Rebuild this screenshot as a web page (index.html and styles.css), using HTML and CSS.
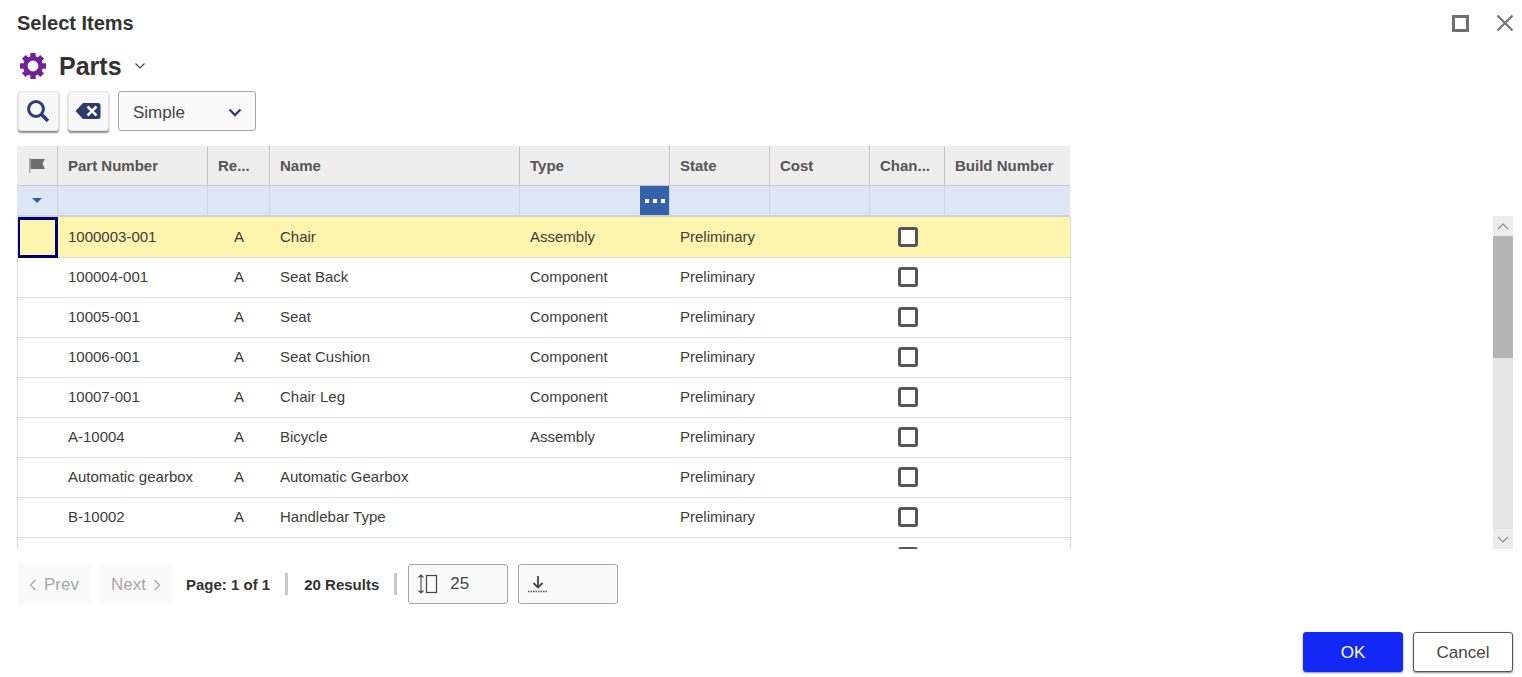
FILE: index.html
```html
<!DOCTYPE html>
<html lang="en">
<head>
<meta charset="utf-8">
<title>Select Items</title>
<link rel="stylesheet" href="styles.css">
</head>
<body>
<div class="dialog">
  <header class="titlebar">
    <h1 class="title">Select Items</h1>
    <div class="window-actions">
      <svg class="win-icon" width="17" height="17" viewBox="0 0 17 17"><rect x="1.500" y="1.500" width="14" height="14" fill="none" stroke="#6e6e6e" stroke-width="3"/></svg>
      <svg class="win-icon" width="18" height="18" viewBox="0 0 18 18"><path d="M1.500 1.500l15 15M16.500 1.500l-15 15" fill="none" stroke="#767676" stroke-width="2.200"/></svg>
    </div>
  </header>

  <div class="context">
    <svg class="gear" width="26" height="26" viewBox="0 0 26 26">
      <g fill="#74209a">
        <rect x="10.300" y="0" width="5.400" height="5"/>
        <rect x="10.300" y="0" width="5.400" height="5" transform="rotate(45 13 13)"/>
        <rect x="10.300" y="0" width="5.400" height="5" transform="rotate(90 13 13)"/>
        <rect x="10.300" y="0" width="5.400" height="5" transform="rotate(135 13 13)"/>
        <rect x="10.300" y="0" width="5.400" height="5" transform="rotate(180 13 13)"/>
        <rect x="10.300" y="0" width="5.400" height="5" transform="rotate(225 13 13)"/>
        <rect x="10.300" y="0" width="5.400" height="5" transform="rotate(270 13 13)"/>
        <rect x="10.300" y="0" width="5.400" height="5" transform="rotate(315 13 13)"/>
      </g>
      <circle cx="13" cy="13" r="7.700" fill="none" stroke="#74209a" stroke-width="4.600"/>
    </svg>
    <span class="context-name">Parts</span>
    <svg class="context-caret" width="12" height="8" viewBox="0 0 12 8"><path d="M1.500 1.500l4.500 4.500 4.500-4.500" fill="none" stroke="#444" stroke-width="1.200"/></svg>
  </div>

  <div class="toolbar">
    <button class="tool-btn" type="button" aria-label="Search">
      <svg width="24" height="24" viewBox="0 0 24 24"><circle cx="10" cy="10" r="7.400" fill="none" stroke="#2b3a82" stroke-width="3"/><path d="M15.500 15.500l6.500 6.500" stroke="#2b3a82" stroke-width="3.600" fill="none"/></svg>
    </button>
    <button class="tool-btn" type="button" aria-label="Clear">
      <svg width="26" height="18" viewBox="0 0 26 18"><path fill="#2b3a66" fill-rule="evenodd" d="M8 1h15a2.500 2.500 0 0 1 2.500 2.500v11A2.500 2.500 0 0 1 23 17H8L.5 9zM11.600 5.400l3.600 3.600-3.600 3.600 1.800 1.800 3.600-3.600 3.600 3.600 1.800-1.800-3.600-3.600 3.600-3.600-1.800-1.800-3.600 3.600-3.600-3.600z"/></svg>
    </button>
    <div class="mode-select">
      <span>Simple</span>
      <svg width="14" height="9" viewBox="0 0 14 9"><path d="M1.500 1.500l5.500 5.500 5.500-5.500" fill="none" stroke="#2b3a82" stroke-width="2.400"/></svg>
    </div>
  </div>

  <div class="grid-head">
    <div class="row head-cols head-row">
      <div class="cell flag-cell"><svg width="18" height="15" viewBox="0 0 18 15"><path d="M1 0h1.500v15H1z" fill="#a8a8a8"/><path d="M2.500 1H17l-2.500 4.500L17 11H2.500z" fill="#6e6e6e"/></svg></div>
      <div class="cell">Part Number</div>
      <div class="cell">Re...</div>
      <div class="cell">Name</div>
      <div class="cell">Type</div>
      <div class="cell">State</div>
      <div class="cell">Cost</div>
      <div class="cell">Chan...</div>
      <div class="cell">Build Number</div>
    </div>
    <div class="row head-cols filter-row">
      <div class="cell flag-cell"><span class="filter-caret"></span></div>
      <div class="cell"></div>
      <div class="cell"></div>
      <div class="cell"></div>
      <div class="cell type-filter"><span class="ellipsis-btn"><i></i><i></i><i></i></span></div>
      <div class="cell"></div>
      <div class="cell"></div>
      <div class="cell"></div>
      <div class="cell"></div>
    </div>
  </div>

  <div class="grid-body">
    <div class="rows">
      <div class="row data-row selected">
        <div class="cell flag-cell focus"></div><div class="cell">1000003-001</div><div class="cell center">A</div><div class="cell">Chair</div><div class="cell">Assembly</div><div class="cell">Preliminary</div><div class="cell"></div><div class="cell center"><span class="check"></span></div><div class="cell"></div>
      </div>
      <div class="row data-row">
        <div class="cell flag-cell"></div><div class="cell">100004-001</div><div class="cell center">A</div><div class="cell">Seat Back</div><div class="cell">Component</div><div class="cell">Preliminary</div><div class="cell"></div><div class="cell center"><span class="check"></span></div><div class="cell"></div>
      </div>
      <div class="row data-row">
        <div class="cell flag-cell"></div><div class="cell">10005-001</div><div class="cell center">A</div><div class="cell">Seat</div><div class="cell">Component</div><div class="cell">Preliminary</div><div class="cell"></div><div class="cell center"><span class="check"></span></div><div class="cell"></div>
      </div>
      <div class="row data-row">
        <div class="cell flag-cell"></div><div class="cell">10006-001</div><div class="cell center">A</div><div class="cell">Seat Cushion</div><div class="cell">Component</div><div class="cell">Preliminary</div><div class="cell"></div><div class="cell center"><span class="check"></span></div><div class="cell"></div>
      </div>
      <div class="row data-row">
        <div class="cell flag-cell"></div><div class="cell">10007-001</div><div class="cell center">A</div><div class="cell">Chair Leg</div><div class="cell">Component</div><div class="cell">Preliminary</div><div class="cell"></div><div class="cell center"><span class="check"></span></div><div class="cell"></div>
      </div>
      <div class="row data-row">
        <div class="cell flag-cell"></div><div class="cell">A-10004</div><div class="cell center">A</div><div class="cell">Bicycle</div><div class="cell">Assembly</div><div class="cell">Preliminary</div><div class="cell"></div><div class="cell center"><span class="check"></span></div><div class="cell"></div>
      </div>
      <div class="row data-row">
        <div class="cell flag-cell"></div><div class="cell">Automatic gearbox</div><div class="cell center">A</div><div class="cell">Automatic Gearbox</div><div class="cell"></div><div class="cell">Preliminary</div><div class="cell"></div><div class="cell center"><span class="check"></span></div><div class="cell"></div>
      </div>
      <div class="row data-row">
        <div class="cell flag-cell"></div><div class="cell">B-10002</div><div class="cell center">A</div><div class="cell">Handlebar Type</div><div class="cell"></div><div class="cell">Preliminary</div><div class="cell"></div><div class="cell center"><span class="check"></span></div><div class="cell"></div>
      </div>
      <div class="row data-row">
        <div class="cell flag-cell"></div><div class="cell"></div><div class="cell"></div><div class="cell"></div><div class="cell"></div><div class="cell"></div><div class="cell"></div><div class="cell center"><span class="check"></span></div><div class="cell"></div>
      </div>
    </div>
    <div class="scrollbar">
      <div class="scroll-arrow"><svg width="12" height="7" viewBox="0 0 12 7"><path d="M1 6l5-5 5 5" fill="none" stroke="#8a8a8a" stroke-width="1.200"/></svg></div>
      <div class="scroll-thumb"></div>
      <div class="scroll-track"></div>
      <div class="scroll-arrow"><svg width="12" height="7" viewBox="0 0 12 7"><path d="M1 1l5 5 5-5" fill="none" stroke="#8a8a8a" stroke-width="1.200"/></svg></div>
    </div>
  </div>

  <div class="pager">
    <div class="page-btn"><svg width="8" height="12" viewBox="0 0 8 12"><path d="M6.500 1L1.500 6l5 5" fill="none" stroke="#a6a6a6" stroke-width="1.200"/></svg><span>Prev</span></div>
    <div class="page-btn"><span>Next</span><svg width="8" height="12" viewBox="0 0 8 12"><path d="M1.500 1l5 5-5 5" fill="none" stroke="#a6a6a6" stroke-width="1.200"/></svg></div>
    <span class="pager-text page-info">Page: 1 of 1</span>
    <span class="pager-sep"></span>
    <span class="pager-text">20 Results</span>
    <span class="pager-sep last-sep"></span>
    <div class="pager-box">
      <svg width="22" height="20" viewBox="0 0 22 20"><path d="M4 1v18M1.500 3.500L4 1l2.500 2.500M1.500 16.500L4 19l2.500-2.500" fill="none" stroke="#444" stroke-width="1.100"/><rect x="9.500" y="1.500" width="10" height="17" fill="none" stroke="#444" stroke-width="1.200"/></svg>
      <span>25</span>
    </div>
    <div class="pager-box export">
      <svg width="22" height="18" viewBox="0 0 22 18"><path d="M11 1v11M6.500 8L11 12.500 15.500 8" fill="none" stroke="#444" stroke-width="1.800"/><path d="M1 16.500h20" stroke="#555" stroke-width="1.400" stroke-dasharray="1.500 1"/></svg>
    </div>
  </div>

  <footer class="actions">
    <button class="action-btn primary" type="button">OK</button>
    <button class="action-btn" type="button">Cancel</button>
  </footer>
</div>
</body>
</html>
```
FILE: styles.css
```css
* { box-sizing: border-box; }
html, body { margin: 0; padding: 0; height: 100%; overflow: hidden; background: #fff; }
body { font-family: "Liberation Sans", Arial, sans-serif; color: #333; font-size: 15px; }

.dialog { display: flex; flex-direction: column; height: 677px; padding: 0 9px 0 17px; }

.titlebar { display: flex; justify-content: space-between; align-items: center; height: 46px; }
.title { margin: 0; font-size: 20px; font-weight: bold; color: #333; }
.window-actions { display: flex; align-items: center; gap: 27px; margin-right: -1px; }
.win-icon { display: block; }

.context { display: flex; align-items: center; height: 40px; padding-left: 3px; }
.gear { display: block; }
.context-name { margin-left: 13px; font-size: 25px; font-weight: bold; color: #333; }
.context-caret { margin-left: 12px; }

.toolbar { display: flex; align-items: center; gap: 9px; height: 44px; margin-top: 3px; padding-left: 1px; }
.tool-btn { width: 41px; height: 40px; padding: 0 2px 0 0; display: flex; align-items: center; justify-content: center; background: #f7f7f7; border: 1px solid #e4e4e4; border-radius: 3px; box-shadow: 0 2px 2px #8d8d8d; }
.mode-select { display: flex; justify-content: space-between; align-items: center; width: 138px; height: 40px; padding: 3px 13px 0 14px; font-size: 17px; color: #444; background: #fafafa; border: 1px solid #a5a5a5; border-radius: 3px; }

.grid-head { width: 1053px; margin-top: 13px; }
.row { display: grid; grid-template-columns: 41px 150px 62px 250px 150px 100px 100px 75px 125px; }
.head-cols { grid-template-columns: 40px 150px 62px 250px 150px 100px 100px 75px 126px; }
.cell { display: flex; align-items: center; min-width: 0; padding: 0 10px; white-space: nowrap; }
.flag-cell { justify-content: center; padding: 0; }
.center { justify-content: center; padding: 0; }

.head-row { height: 40px; background: #eeeeee; border-bottom: 1px solid #c8c8c8; font-weight: bold; color: #555; }
.head-row .cell { border-left: 1px solid #c4c4c4; }
.head-row .cell:first-child { border-left: 0; }

.filter-row { height: 31px; background: #dde6f5; border-bottom: 2px solid #d0d0d0; }
.filter-row .cell { border-left: 1px solid #cdd3dc; }
.filter-row .cell:first-child { border-left: 0; }
.filter-caret { width: 0; height: 0; border-left: 5px solid transparent; border-right: 5px solid transparent; border-top: 5px solid #2f5faa; }
.type-filter { justify-content: flex-end; padding: 0; }
.ellipsis-btn { display: flex; align-items: center; justify-content: center; gap: 4px; width: 29px; height: 29px; background: #3563ab; }
.ellipsis-btn i { width: 4px; height: 4px; background: #fff; }

.grid-body { display: flex; justify-content: space-between; height: 332px; }
.rows { width: 1054px; overflow: hidden; border-left: 1px solid #dcdcdc; }
.data-row { height: 40px; color: #3c3c3c; border-bottom: 1px solid #dcdcdc; border-right: 1px solid #dcdcdc; margin-left: -1px; }
.data-row .cell { padding-bottom: 2px; }
.selected { height: 41px; background: #fdf5ae; }
.selected .cell { padding-bottom: 1px; }
.data-row .focus { margin-bottom: -1px; padding: 0; border: 3px solid #00007f; }
.check { width: 20px; height: 20px; margin-top: 1px; background: #fff; border: 3px solid #555; border-radius: 3px; }

.scrollbar { display: flex; flex-direction: column; width: 20px; margin-top: -1px; background: #e6e6e6; }
.scroll-arrow { display: flex; align-items: center; justify-content: center; height: 20px; background: #ececec; }
.scroll-thumb { height: 122px; background: #b4b4b4; }
.scroll-track { flex: 1; }

.pager { display: flex; align-items: center; height: 40px; margin-top: 15px; padding-left: 1px; }
.page-btn { display: flex; align-items: center; justify-content: center; gap: 7px; width: 72px; height: 40px; margin-right: 10px; padding-top: 1px; font-size: 17px; color: #a6a6a6; background: #fafafa; }
.pager-text { font-size: 15px; font-weight: bold; color: #333; }
.page-info { margin-left: 4px; }
.pager-sep { width: 3px; height: 22px; margin: 0 16px 0 15px; background: #c8c8c8; }
.last-sep { margin-right: 11px; }
.pager-box { display: flex; align-items: center; gap: 11px; width: 100px; height: 40px; padding-left: 8px; margin-right: 10px; font-size: 17px; color: #444; background: #fafafa; border: 1px solid #a5a5a5; border-radius: 3px; }
.export { gap: 0; }

.actions { display: flex; justify-content: flex-end; gap: 10px; margin-top: 28px; }
.action-btn { width: 100px; height: 40px; padding: 1px 0 0; font-family: inherit; font-size: 17px; color: #444; background: #fff; border: 1px solid #555; border-radius: 3px; box-shadow: 0 1px 2px #8d8d8d; }
.primary { color: #fff; background: #1428f5; border-color: #1428f5; }
```
